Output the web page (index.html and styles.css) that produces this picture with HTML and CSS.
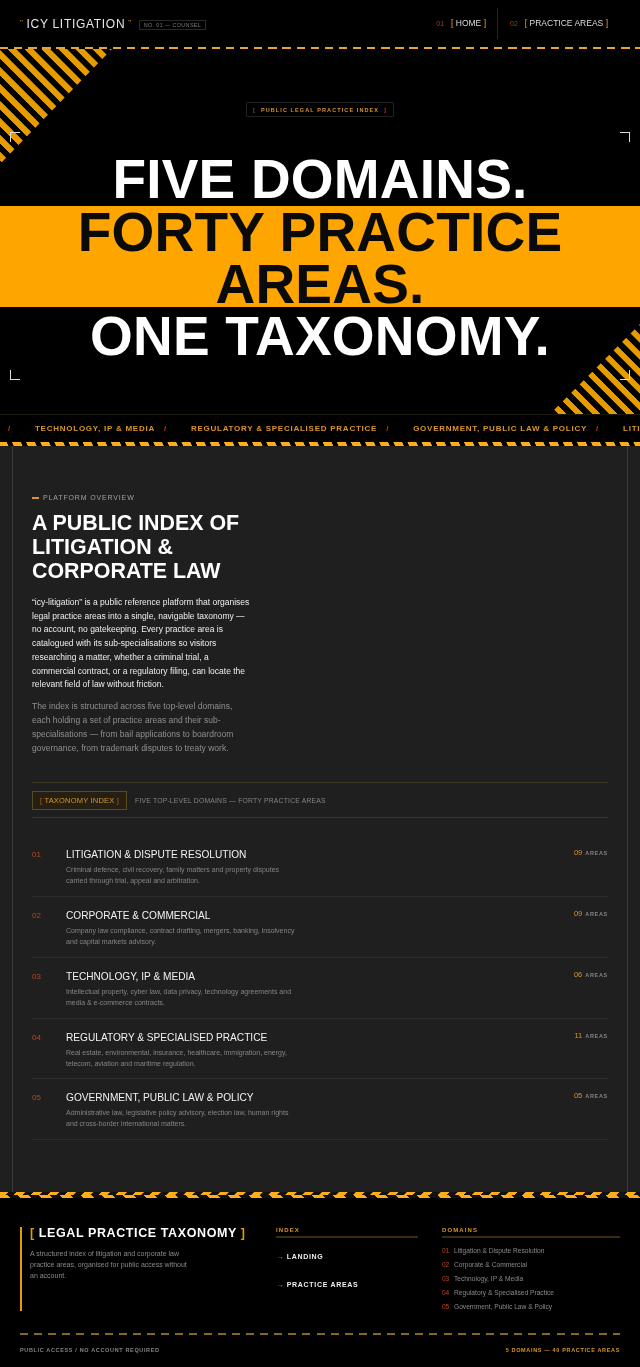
FILE: index.html
```html
<!DOCTYPE html>
<html lang="en">
<head>
    <meta charset="UTF-8">
    <meta name="viewport" content="width=device-width, initial-scale=1.0">
    <title>Icy Litigation</title>
    <link rel="stylesheet" href="styles.css">
</head>
<body>
    <header class="topbar">
        <div class="brand">
            <span class="brand-name"><i>"</i>ICY LITIGATION<i>"</i></span>
            <span class="brand-tag">NO. 01 — COUNSEL</span>
        </div>
        <nav class="topnav">
            <a class="nav-link"><em>01</em><b>[</b> HOME <b>]</b></a>
            <a class="nav-link"><em>02</em><b>[</b> PRACTICE AREAS <b>]</b></a>
        </nav>
    </header>

    <section class="hero">
        <div class="stripes stripes-top"></div>
        <div class="stripes stripes-bottom"></div>
        <span class="corner corner-tl"></span>
        <span class="corner corner-tr"></span>
        <span class="corner corner-bl"></span>
        <span class="corner corner-br"></span>
        <div class="hero-badge"><i>[</i>PUBLIC LEGAL PRACTICE INDEX<i>]</i></div>
        <h1 class="hero-title">
            <span>FIVE DOMAINS.</span>
            <span class="hero-band">FORTY PRACTICE AREAS.</span>
            <span>ONE TAXONOMY.</span>
        </h1>
    </section>

    <div class="ticker">
        <i>/</i><span>TECHNOLOGY, IP &amp; MEDIA</span>
        <i>/</i><span>REGULATORY &amp; SPECIALISED PRACTICE</span>
        <i>/</i><span>GOVERNMENT, PUBLIC LAW &amp; POLICY</span>
        <i>/</i><span>LITIGATION &amp; DISPUTE RESOLUTION</span>
    </div>
    <div class="hazard"></div>

    <div class="content-wrap">
        <main class="content">
            <section class="overview">
                <div class="eyebrow">PLATFORM OVERVIEW</div>
                <h2>A PUBLIC INDEX OF LITIGATION &amp; CORPORATE LAW</h2>
                <p class="lead">“icy-litigation” is a public reference platform that organises legal practice areas into a single, navigable taxonomy — no account, no gatekeeping. Every practice area is catalogued with its sub-specialisations so visitors researching a matter, whether a criminal trial, a commercial contract, or a regulatory filing, can locate the relevant field of law without friction.</p>
                <p class="sub">The index is structured across five top-level domains, each holding a set of practice areas and their sub-specialisations — from bail applications to boardroom governance, from trademark disputes to treaty work.</p>
            </section>

            <div class="index-bar">
                <span class="index-badge"><i>[</i> TAXONOMY INDEX <i>]</i></span>
                <span class="index-note">FIVE TOP-LEVEL DOMAINS — FORTY PRACTICE AREAS</span>
            </div>

            <div class="domains">
                <article class="domain">
                    <span class="domain-num">01</span>
                    <div class="domain-body">
                        <h3>LITIGATION &amp; DISPUTE RESOLUTION</h3>
                        <p>Criminal defence, civil recovery, family matters and property disputes carried through trial, appeal and arbitration.</p>
                    </div>
                    <span class="domain-count"><b>09</b>AREAS</span>
                </article>
                <article class="domain">
                    <span class="domain-num">02</span>
                    <div class="domain-body">
                        <h3>CORPORATE &amp; COMMERCIAL</h3>
                        <p>Company law compliance, contract drafting, mergers, banking, insolvency and capital markets advisory.</p>
                    </div>
                    <span class="domain-count"><b>09</b>AREAS</span>
                </article>
                <article class="domain">
                    <span class="domain-num">03</span>
                    <div class="domain-body">
                        <h3>TECHNOLOGY, IP &amp; MEDIA</h3>
                        <p>Intellectual property, cyber law, data privacy, technology agreements and media &amp; e-commerce contracts.</p>
                    </div>
                    <span class="domain-count"><b>06</b>AREAS</span>
                </article>
                <article class="domain">
                    <span class="domain-num">04</span>
                    <div class="domain-body">
                        <h3>REGULATORY &amp; SPECIALISED PRACTICE</h3>
                        <p>Real estate, environmental, insurance, healthcare, immigration, energy, telecom, aviation and maritime regulation.</p>
                    </div>
                    <span class="domain-count"><b>11</b>AREAS</span>
                </article>
                <article class="domain">
                    <span class="domain-num">05</span>
                    <div class="domain-body">
                        <h3>GOVERNMENT, PUBLIC LAW &amp; POLICY</h3>
                        <p>Administrative law, legislative policy advisory, election law, human rights and cross-border international matters.</p>
                    </div>
                    <span class="domain-count"><b>05</b>AREAS</span>
                </article>
            </div>
        </main>
    </div>

    <div class="hazard-chevron"></div>

    <footer class="footer">
        <div class="footer-grid">
            <div class="footer-about">
                <div class="footer-title"><i>[</i> LEGAL PRACTICE TAXONOMY <i>]</i></div>
                <p>A structured index of litigation and corporate law practice areas, organised for public access without an account.</p>
            </div>
            <div class="footer-col">
                <h4>INDEX</h4>
                <a class="footer-link"><i>→</i>LANDING</a>
                <a class="footer-link"><i>→</i>PRACTICE AREAS</a>
            </div>
            <div class="footer-col">
                <h4>DOMAINS</h4>
                <ul class="footer-list">
                    <li><i>01</i>Litigation &amp; Dispute Resolution</li>
                    <li><i>02</i>Corporate &amp; Commercial</li>
                    <li><i>03</i>Technology, IP &amp; Media</li>
                    <li><i>04</i>Regulatory &amp; Specialised Practice</li>
                    <li><i>05</i>Government, Public Law &amp; Policy</li>
                </ul>
            </div>
        </div>
        <div class="footer-bottom">
            <span>PUBLIC ACCESS / NO ACCOUNT REQUIRED</span>
            <span class="footer-stat">5 DOMAINS — 40 PRACTICE AREAS</span>
        </div>
    </footer>
</body>
</html>
```

FILE: styles.css
```css
* {
    box-sizing: border-box;
}
body {
    margin: 0;
    background-color: #000;
    color: #fff;
    font-family: "Liberation Sans", Arial, sans-serif;
    will-change: transform;
}
i, em {
    font-style: normal;
}

/* top bar */
.topbar {
    display: flex;
    justify-content: space-between;
    align-items: center;
    height: 49px;
    padding: 0 32px 2px 20px;
    background-image: repeating-linear-gradient(90deg, #e8a63a 0 8.3px, transparent 8.3px 14.12px);
    background-size: 100% 2px;
    background-position: 0 47px;
    background-repeat: no-repeat;
}
.brand {
    display: flex;
    align-items: center;
    gap: 4px;
}
.brand-name {
    font-size: 12px;
    letter-spacing: 0.7px;
    color: #e6e6e6;
}
.brand-name i {
    color: #d9952a;
    font-size: 8px;
    margin: 0 3px;
    vertical-align: 3px;
}
.brand-name i:first-child {
    margin-left: 0;
}
.brand-tag {
    font-size: 5.5px;
    letter-spacing: 0.3px;
    color: #777;
    border: 1px solid #2a2a2a;
    padding: 1px 4px;
    margin-top: 3px;
}
.topnav {
    display: flex;
    height: 30px;
    align-items: center;
}
.nav-link {
    font-size: 8.5px;
    color: #dcdcdc;
    line-height: 30px;
}
.nav-link:first-child {
    padding-right: 11px;
    border-right: 1px solid #222;
}
.nav-link:last-child {
    padding-left: 12px;
}
.nav-link em {
    font-size: 7px;
    color: #b03a1c;
    margin-right: 7px;
}
.nav-link b {
    color: #f0a020;
    font-weight: normal;
}

/* hero */
.hero {
    position: relative;
    height: 365px;
    padding-top: 53px;
    overflow: hidden;
    text-align: center;
}
.stripes {
    position: absolute;
}
.stripes-top {
    top: 0;
    left: 0;
    width: 112px;
    height: 128px;
    background: repeating-linear-gradient(45deg, #e69b00 0 5.6px, transparent 6.2px 11.4px, #e69b00 12px);
    clip-path: polygon(0 0, 100% 0, 0 115px);
}
.stripes-bottom {
    right: 0;
    bottom: 0;
    width: 90px;
    height: 90px;
    background: repeating-linear-gradient(45deg, transparent 0 5.6px, #e69b00 6.2px 11.4px, transparent 12px);
    clip-path: polygon(100% 0, 100% 100%, 0 100%);
}
.corner {
    position: absolute;
    width: 10px;
    height: 10px;
    border: 0 solid #ddd;
}
.corner-tl {
    top: 83px;
    left: 10px;
    border-width: 1px 0 0 1px;
}
.corner-tr {
    top: 83px;
    right: 10px;
    border-width: 1px 1px 0 0;
}
.corner-bl {
    bottom: 34px;
    left: 10px;
    border-width: 0 0 1px 1px;
}
.corner-br {
    bottom: 34px;
    right: 10px;
    border-width: 0 1px 1px 0;
}
.hero-badge {
    position: relative;
    display: flex;
    width: 148px;
    height: 15px;
    margin: 0 auto;
    gap: 5px;
    justify-content: center;
    align-items: center;
    border: 1px solid #222;
    border-radius: 1px;
    font-size: 5.5px;
    font-weight: bold;
    letter-spacing: 1.1px;
    color: #d9952a;
}
.hero-badge i {
    color: #a8491c;
}
.hero-title {
    position: relative;
    margin: 35.5px 0 0;
    font-size: 55px;
    line-height: 52px;
    letter-spacing: 0.2px;
}
.hero-title span {
    display: block;
}
.hero-band {
    height: 101px;
    margin: 1px 0 3px;
    padding: 0 60px;
    background-color: #ffa500;
    color: #0a0a0a;
}

/* ticker */
.ticker {
    display: flex;
    align-items: center;
    height: 28px;
    padding-left: 8px;
    overflow: hidden;
    white-space: nowrap;
    border-top: 1px solid #1c1a10;
    font-size: 8px;
    font-weight: bold;
    letter-spacing: 0.75px;
    color: #d9952a;
}
.ticker i {
    color: #c0431c;
    margin-right: 24px;
}
.ticker span {
    margin-right: 9px;
}
.hazard {
    height: 4px;
    background: repeating-linear-gradient(65deg, #ffae1a 0 7.4px, #000 8px 12.2px, #ffae1a 12.8px);
}

/* main panel */
.content-wrap {
    padding: 0 12px;
    background-color: #1f1f1f;
}
.content {
    height: 746px;
    padding: 48px 19px 0;
    border-left: 1px solid #3a3a3a;
    border-right: 1px solid #3a3a3a;
}
.overview {
    max-width: 220px;
}
.eyebrow {
    display: flex;
    align-items: center;
    gap: 4px;
    font-size: 7px;
    letter-spacing: 0.85px;
    color: #a0a0a0;
}
.eyebrow::before {
    content: "";
    width: 7px;
    height: 2px;
    background-color: #d9952a;
}
.overview h2 {
    margin: 10px 0 13px;
    font-size: 21.4px;
    line-height: 24px;
    color: #fff;
}
.lead {
    margin: 0 0 8.5px;
    font-size: 8.5px;
    line-height: 13.7px;
    color: #eee;
}
.sub {
    margin: 0;
    font-size: 8.5px;
    line-height: 13.7px;
    color: #8f8f8f;
}
.index-bar {
    display: flex;
    align-items: center;
    gap: 8px;
    height: 36px;
    margin-top: 27px;
    border-top: 1px solid #3a3622;
    border-bottom: 1px solid #3a3622;
}
.index-badge {
    padding: 4px 7px;
    border: 1px solid #5a4a20;
    background-color: #262013;
    font-size: 7.5px;
    letter-spacing: 0.2px;
    color: #d9952a;
}
.index-badge i {
    color: #c0541c;
}
.index-note {
    font-size: 6.8px;
    letter-spacing: 0.2px;
    color: #858585;
}
.domains {
    margin-top: 18px;
}
.domain {
    display: flex;
    align-items: flex-start;
    height: 60.8px;
    padding-top: 12px;
    border-bottom: 1px solid #2c2c2c;
}
.domain-num {
    width: 34px;
    font-size: 8px;
    line-height: 13px;
    color: #c0431c;
}
.domain-body {
    flex: 1;
}
.domain-body h3 {
    margin: 0 0 3px;
    font-size: 10.15px;
    line-height: 13px;
    font-weight: normal;
    color: #f2f2f2;
}
.domain-body p {
    margin: 0;
    max-width: 232px;
    font-size: 7px;
    line-height: 11px;
    color: #858585;
}
.domain-count {
    margin-top: -1px;
    font-size: 5.5px;
    font-weight: bold;
    letter-spacing: 0.7px;
    line-height: 11px;
    color: #858585;
}
.domain-count b {
    margin-right: 3px;
    font-size: 7.5px;
    font-weight: normal;
    letter-spacing: 0;
    color: #d9952a;
}
.hazard-chevron {
    height: 6px;
    background-image:
        repeating-linear-gradient(135deg, #ffae1a 0 5.6px, transparent 6.2px 11.4px, #ffae1a 12px),
        repeating-linear-gradient(45deg, #ffae1a 0 7px, transparent 7.6px 14.25px, #ffae1a 14.85px);
    background-size: 100% 3px, 100% 3px;
    background-position: 0 0, 0 3px;
    background-repeat: no-repeat;
    background-color: #111;
}

/* footer */
.footer {
    padding: 29px 20px 0;
}
.footer-grid {
    display: grid;
    grid-template-columns: 232px 142px 1fr;
    gap: 24px;
    height: 87px;
}
.footer-about {
    border-left: 2px solid #e69b00;
    padding-left: 8px;
    height: 84px;
}
.footer-title {
    font-size: 12.5px;
    font-weight: bold;
    letter-spacing: 0.6px;
    line-height: 13px;
    white-space: nowrap;
}
.footer-title i {
    color: #e69b00;
}
.footer-about p {
    margin: 8px 0 0;
    max-width: 160px;
    font-size: 7px;
    line-height: 11px;
    color: #8a8a8a;
}
.footer-col h4 {
    margin: 0;
    padding-bottom: 3px;
    border-bottom: 2px solid #3a2a10;
    font-size: 6px;
    letter-spacing: 1.1px;
    color: #d9952a;
}
.footer-link {
    display: block;
    margin-top: 12px;
    font-size: 7px;
    font-weight: bold;
    letter-spacing: 0.7px;
    line-height: 14px;
    color: #eee;
}
.footer-link i {
    margin: 0 2px 0 1px;
    color: #e69b00;
    font-weight: normal;
}
.footer-link + .footer-link {
    margin-top: 14px;
}
.footer-list {
    list-style: none;
    margin: 6px 0 0;
    padding: 0;
}
.footer-list li {
    font-size: 6.65px;
    line-height: 14px;
    color: #8a8a8a;
}
.footer-list i {
    display: inline-block;
    width: 12px;
    color: #c0431c;
    font-size: 6.5px;
}
.footer-bottom {
    display: flex;
    justify-content: space-between;
    margin-top: 19px;
    padding-top: 14px;
    background-image: repeating-linear-gradient(90deg, #8a6520 0 8px, transparent 8px 14.12px);
    background-size: 100% 2px;
    background-repeat: no-repeat;
    font-size: 5.5px;
    font-weight: bold;
    letter-spacing: 0.65px;
    color: #858585;
}
.footer-stat {
    color: #d9952a;
}
```
